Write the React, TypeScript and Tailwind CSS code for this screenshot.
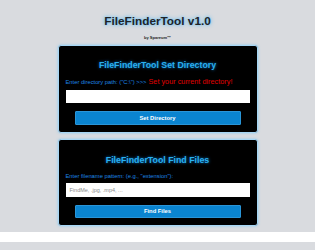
import React from "react";

export default function App() {
  return (
    <div className="w-[315px] h-[250px] overflow-hidden bg-[#d9dbdf] font-['Liberation_Sans',Arial,sans-serif] flex flex-col">
      <div className="flex flex-col items-center pt-[14px]">
        <h1 className="text-[11.8px] leading-[14px] font-bold text-[#1f2328] [text-shadow:0_0_4px_#4fb4f0,0_0_2px_#8fd0f5]">
          FileFinderTool v1.0
        </h1>
        <div className="mt-[7px] text-[4px] leading-[6px] font-bold text-[#222]">by Spareum™</div>

        <div className="mt-[4px] w-[200px] h-[88px] bg-black border border-[#a6d6f5] rounded-[3px] shadow-[0_0_3px_#8ccbf2] px-[7px] pt-[14px] flex flex-col">
          <h2 className="text-center text-[8.8px] leading-[10px] font-bold text-[#2ab0f0] [text-shadow:0_0_3px_#0b7fd0]">
            FileFinderTool Set Directory
          </h2>
          <div className="mt-[7px] h-[10px] flex items-center whitespace-nowrap">
            <span className="text-[5.8px] text-[#1e88e5]">Enter directory path: ("C:\") &gt;&gt;&gt;</span>
            <span className="ml-[2px] text-[7.3px] text-[#e00000]">Set your current directory!</span>
          </div>
          <div className="mt-[3px] h-[13px] bg-white"></div>
          <div className="mt-[8px] mx-auto w-[166px] h-[14px] bg-[#0a84d0] rounded-[1px] border border-[#2a95d8] flex items-center justify-center text-white font-bold text-[5.8px]">
            Set Directory
          </div>
        </div>

        <div className="mt-[6px] w-[200px] h-[87px] bg-black border border-[#a6d6f5] rounded-[3px] shadow-[0_0_3px_#8ccbf2] px-[7px] pt-[15px] flex flex-col">
          <h2 className="text-center text-[8.8px] leading-[10px] font-bold text-[#2ab0f0] [text-shadow:0_0_3px_#0b7fd0]">
            FileFinderTool Find Files
          </h2>
          <div className="mt-[6px] h-[10px] flex items-center whitespace-nowrap">
            <span className="text-[5.8px] text-[#1e88e5]">Enter filename pattern: (e.g., "extension"):</span>
          </div>
          <div className="mt-[2px] h-[14px] bg-white flex items-center pl-[4px] text-[5.5px] text-[#8a8a8a]">
            FindMe, .jpg, .mp4, ...
          </div>
          <div className="mt-[8px] mx-auto w-[166px] h-[13px] bg-[#0a84d0] rounded-[1px] border border-[#2a95d8] flex items-center justify-center text-white font-bold text-[5.8px]">
            Find Files
          </div>
        </div>
      </div>
      <div className="mt-[6px] h-[10px] bg-white"></div>
      <div className="flex-1 bg-[#d9dbdf]"></div>
    </div>
  );
}
